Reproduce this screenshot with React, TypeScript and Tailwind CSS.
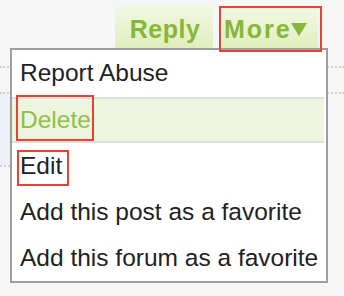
import React from "react"

const items = ["Report Abuse", "Delete", "Edit", "Add this post as a favorite", "Add this forum as a favorite"]

export default function App() {
  return (
    <div className="relative h-[296px] w-[344px] overflow-hidden bg-[#f6f6f6] font-['Liberation_Sans',Arial,sans-serif]">
      {/* toolbar */}
      <div className="flex h-[66px] items-start pl-[115px] pt-[6px]">
        <div className="flex h-[60px] w-[98px] justify-center bg-gradient-to-b from-[#f2f8e3] to-[#d8eaae] pl-[2px] pt-[11px] text-[25px] font-bold leading-[25px] tracking-[0.5px] text-[#87b737]">
          Reply
        </div>
        <div className="ml-[9px] mt-[2px] flex h-[58px] w-[96px] items-start bg-gradient-to-b from-[#f2f8e3] to-[#d8eaae] pl-[2px] pt-[9px] text-[25px] font-bold leading-[25px] tracking-[2px] text-[#87b737]">
          More
          <svg width="16" height="13" viewBox="0 0 16 13" className="ml-[-1px] mt-[6px]">
            <path d="M0 0 H16 L8 13 Z" fill="#87b737" />
          </svg>
        </div>
      </div>

      {/* page rows behind the menu */}
      <div className="h-[26px] border-t-2 border-dotted border-[#cfcfcf]" />
      <div className="flex h-[73px] border-t-2 border-dotted border-[#cfcfcf]">
        <div className="w-[10px] bg-[#eef0f7]" />
      </div>
      <div className="w-[10px] border-t-2 border-dotted border-[#cfcfcf]" />

      {/* dropdown */}
      <div className="absolute left-[10px] top-[48px] flex w-[318px] flex-col border-2 border-[#9e9e9e] bg-white text-[24.5px] text-[#222]">
        {items.map((label, i) =>
          label === "Delete" ? (
            <div
              key={label}
              className="mr-[2px] flex h-[46px] items-center border-y-2 border-[#dedede] bg-[#eef5df] pl-[8px] text-[#8fbf43]"
            >
              {label}
            </div>
          ) : (
            <div key={label} className={`flex items-center pl-[8px] ${i === 0 ? "h-[47px]" : "h-[46px]"}`}>
              {label}
            </div>
          )
        )}
      </div>

      {/* annotation boxes */}
      <div className="absolute left-[219px] top-[6px] h-[46px] w-[103px] border-2 border-[#e8432e]" />
      <div className="absolute left-[16px] top-[95px] h-[46px] w-[78px] border-2 border-[#e8432e]" />
      <div className="absolute left-[17px] top-[150px] h-[36px] w-[52px] border-2 border-[#e8432e]" />
    </div>
  )
}
